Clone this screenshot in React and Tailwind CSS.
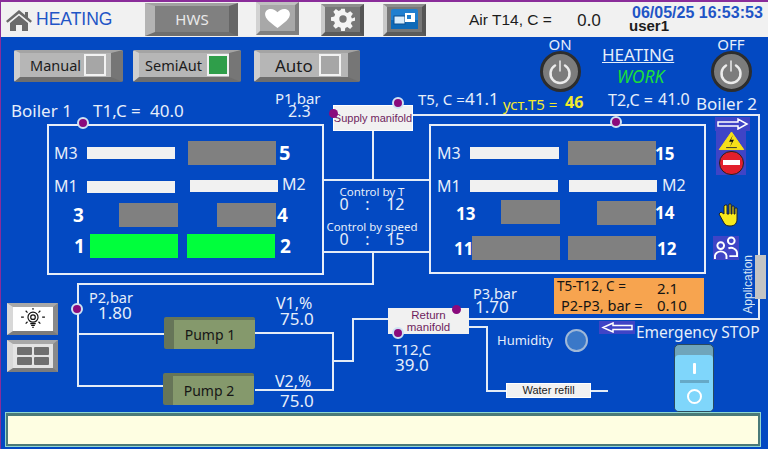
import React from "react";

const Noto = "font-['Noto_Sans',sans-serif]";
const Arial = "font-['Liberation_Sans',sans-serif]";

/* Free-canvas pieces of the process diagram */
function At({ x, y, className = "", children }) {
  return (
    <div className={`absolute ${className}`} style={{ left: x, top: y }}>
      {children}
    </div>
  );
}
function T({ x, y, c = "text-[#e6eefa]", s = "text-[16px]", children }) {
  return (
    <At x={x} y={y} className={`whitespace-nowrap leading-none ${Noto} ${c} ${s}`}>
      {children}
    </At>
  );
}
/* two-line reading: caption above value */
function Reading({ x, y, cap, val, capS = "text-[15px]", valS = "text-[17px]", indent, gap = "leading-[13px]" }) {
  return (
    <At x={x} y={y} className={`flex flex-col whitespace-nowrap text-[#e6eefa] ${Noto}`}>
      <span className={`${capS} ${gap}`}>{cap}</span>
      <span className={`${valS} ${gap}`} style={{ marginLeft: indent }}>
        {val}
      </span>
    </At>
  );
}
function Pipe({ x, y, w, h }) {
  return <div className="absolute bg-[#e4ecf6]" style={{ left: x, top: y, width: w || 2, height: h || 2 }} />;
}
function Dot({ x, y, ring = true }) {
  return ring ? (
    <div className="absolute w-[12px] h-[12px] rounded-full bg-[#8a0a7c] border-2 border-[#cfe2f3]" style={{ left: x - 6, top: y - 6 }} />
  ) : (
    <div className="absolute w-[9px] h-[9px] rounded-full bg-[#8a0a7c]" style={{ left: x - 4, top: y - 4 }} />
  );
}
function Power({ x, y, label }) {
  return (
    <At x={x} y={y} className="flex flex-col items-center w-[42px]">
      <span className={`text-[#e6eefa] text-[15px] leading-[14px] ${Noto}`}>{label}</span>
      <div className="w-[41px] h-[41px] rounded-full bg-[#7c7c7c] border-[3px] border-[#2d2d2d] flex items-center justify-center">
        <svg width="26" height="26" viewBox="0 0 26 26" fill="none" stroke="#ececec" strokeLinecap="round">
          <path d="M8 6.500a9.500 9.500 0 1 0 10 0" strokeWidth="2.500" />
          <path d="M13 2v10" strokeWidth="1.500" />
        </svg>
      </div>
    </At>
  );
}

/* Header button with mitred bevel */
function HeadBtn({ className, children }) {
  return (
    <div className={`flex items-center justify-center shrink-0 border-solid border-t-[3px] border-l-[4px] border-r-[4px] border-b-[4px] ${className}`}>
      {children}
    </div>
  );
}
function SideBtn({ className, children }) {
  return (
    <div className={`w-[51px] flex items-center justify-center border-solid border-t-[4px] border-l-[6px] border-r-[5px] border-b-[4px] border-t-[#a8a8a8] border-l-[#d8d8d8] border-r-[#8a8a8a] border-b-[#7c7c7c] ${className}`}>
      {children}
    </div>
  );
}
const darkBtn = "w-[43px] h-[32px] bg-[#777777] border-t-[#8d8d8d] border-l-[#c9c9c9] border-r-[#555555] border-b-[#5b5b5b]";

function Lamp({ on, className = "" }) {
  return (
    <div className={`w-[22px] h-[22px] shrink-0 border-[2px] border-[#f2f2f2] ${on ? "bg-[#2f9e4a]" : "bg-[#a6a6a6]"} ${className}`} />
  );
}
function Mode({ w, label, on, size, pad, lamp }) {
  return (
    <div
      className={`flex items-center justify-between h-[32px] rounded-[2px] bg-[#b6b6b6] border-solid border-t-[3px] border-l-[6px] border-r-[12px] border-b-[5px] border-t-[#a4a4a4] border-l-[#cfcfcf] border-r-[#767676] border-b-[#6e6e6e] ${w}`}
    >
      <span className={`text-[#1c1c1c] leading-none whitespace-nowrap ${size} ${Noto} ${pad}`}>{label}</span>
      <Lamp on={on} className={lamp} />
    </div>
  );
}
function Pump({ x, y, label }) {
  return (
    <At x={x} y={y} className="w-[91px] h-[32px] bg-[#85996c] border-solid border-l-[10px] border-t-[3px] border-l-[#667558] border-t-[#667558] rounded-[2px] flex items-center justify-center pr-[9px]">
      <span className={`text-[#161616] text-[14px] leading-none ${Noto}`}>{label}</span>
    </At>
  );
}

/* Boiler contents */
const Bar = ({ className = "" }) => <div className={`h-[12px] bg-[#f1f1f1] shrink-0 ${className}`} />;
const Block = ({ className = "" }) => <div className={`h-[24px] bg-[#808080] shrink-0 ${className}`} />;
const Lbl = ({ className = "", children }) => (
  <span className={`text-[#e6eefa] text-[16px] leading-none whitespace-nowrap ${Noto} ${className}`}>{children}</span>
);
const Num = ({ className = "", children }) => (
  <span className={`text-white font-bold leading-none whitespace-nowrap ${Noto} ${className}`}>{children}</span>
);

function Boiler1() {
  return (
    <At x={47} y={124} className="w-[277px] h-[151px] border-2 border-[#e8eef8] flex flex-col pt-[15px]">
      <div className="flex items-center h-[24px]">
        <Lbl className="w-[38px] pl-[5px] text-[15.500px]">M3</Lbl>
        <Bar className="w-[88px]" />
        <Block className="w-[88px] ml-[13px]" />
        <Num className="text-[20px] ml-[3px]">5</Num>
      </div>
      <div className="flex items-center h-[24px] mt-[9px]">
        <Lbl className="w-[38px] pl-[5px] text-[15.500px]">M1</Lbl>
        <Bar className="w-[88px] mt-[2px]" />
        <Bar className="w-[88px] ml-[15px] mb-[1px]" />
        <Lbl className="ml-[4px] mb-[4px] text-[15.500px]">M2</Lbl>
      </div>
      <div className="flex items-center h-[24px] mt-[5px]">
        <Num className="text-[19px] w-[70px] pl-[24px]">3</Num>
        <Block className="w-[59px]" />
        <Block className="w-[59px] ml-[39px]" />
        <Num className="text-[19px] ml-[1px]">4</Num>
      </div>
      <div className="flex items-center h-[24px] mt-[7px]">
        <Num className="text-[19px] w-[41px] pl-[25px]">1</Num>
        <Block className="w-[88px] !bg-[#00ff3c]" />
        <Block className="w-[88px] ml-[9px] !bg-[#00ff3c]" />
        <Num className="text-[19px] ml-[5px]">2</Num>
      </div>
    </At>
  );
}
function Boiler2() {
  return (
    <At x={429} y={124} className="w-[277px] h-[150px] border-2 border-[#e8eef8] flex flex-col pt-[15px]">
      <div className="flex items-center h-[24px]">
        <Lbl className="w-[39px] pl-[6px] text-[15.500px]">M3</Lbl>
        <Bar className="w-[89px]" />
        <Block className="w-[88px] ml-[9px]" />
        <Num className="text-[17px] -ml-[1px]">15</Num>
      </div>
      <div className="flex items-center h-[24px] mt-[9px]">
        <Lbl className="w-[39px] pl-[6px] text-[15.500px]">M1</Lbl>
        <Bar className="w-[88px]" />
        <Bar className="w-[88px] ml-[11px]" />
        <Lbl className="ml-[5px] mb-[2px] text-[15.500px]">M2</Lbl>
      </div>
      <div className="flex items-center h-[24px] mt-[2px]">
        <Num className="text-[17px] w-[70px] pl-[25px] mt-[3px]">13</Num>
        <Block className="w-[59px]" />
        <Block className="w-[59px] ml-[37px] mt-[2px]" />
        <Num className="text-[17px] ml-[-1px]">14</Num>
      </div>
      <div className="flex items-center h-[24px] mt-[12px]">
        <Num className="text-[17px] w-[41px] pl-[23px]">11</Num>
        <Block className="w-[88px]" />
        <Block className="w-[88px] ml-[8px]" />
        <Num className="text-[17px] ml-[1px]">12</Num>
      </div>
    </At>
  );
}

function ControlGroup() {
  return (
    <At x={322} y={186} className={`w-[100px] flex flex-col items-center text-[#e6eefa] ${Noto}`}>
      <span className="text-[11.500px] leading-[12px] h-[12px]">Control by T</span>
      <span className="text-[16px] leading-[13px] h-[23px] whitespace-pre">{"0    :    12"}</span>
      <span className="text-[11.500px] leading-[12px] h-[12px]">Control by speed</span>
      <span className="text-[16px] leading-[13px] whitespace-pre">{"0    :    15"}</span>
    </At>
  );
}

function SideIcons() {
  return (
    <At x={715} y={117} className="w-[36px] flex flex-col items-start">
      <div className="w-[35px] h-[14px] bg-[#3f44c6] flex items-center justify-center">
        <svg width="32" height="12" viewBox="0 0 32 12" fill="none" stroke="#fff" strokeWidth="1.500">
          <path d="M1 4h20V1l9 5-9 5V8H1z" />
        </svg>
      </div>
      <div className="w-[30px] h-[44px] ml-[1px] bg-[#3f44c6] flex flex-col items-center">
        <svg width="27" height="20" viewBox="0 0 27 20">
          <path d="M13.500 1 26 19H1z" fill="#f7e019" stroke="#f7e019" />
          <path d="M15 4l-4 7h3l-2 5 4-7h-3z" fill="#111" />
          <path d="M8 17h11" stroke="#333" strokeWidth="1" />
        </svg>
        <div className="w-[25px] h-[25px] rounded-full bg-[#e21f2c] border border-[#222] flex items-center justify-center">
          <div className="w-[17px] h-[5px] bg-white" />
        </div>
      </div>
      <svg className="mt-[28px] ml-[3px]" width="21" height="24" viewBox="0 0 21 24">
        <path d="M6 3v8L3 9 1 11l5 9c1 2 3 3 6 3 5 0 7-3 7-7V5h-2v6h-1V3h-2v8h-1V1h-2v10H9V2H7z" fill="#f8ea1c" stroke="#222" strokeWidth="1" />
      </svg>
      <div className="w-[26px] h-[24px] mt-[9px] -ml-[2px] bg-[#3f44c6]">
        <svg width="26" height="24" viewBox="0 0 27 25" fill="none" stroke="#fff" strokeWidth="2">
          <circle cx="8" cy="10" r="3.500" />
          <circle cx="19" cy="5" r="3.500" />
          <path d="M2 24v-3c0-3 3-5 6-5s6 2 6 5v3" />
          <path d="M16 13c4-2 9 1 9 5v3h-8" />
        </svg>
      </div>
    </At>
  );
}

function Pipes() {
  return (
    <>
      <Pipe x={400} y={114} w={360} />
      <Pipe x={758} y={114} h={205} />
      <Pipe x={372} y={130} h={50} />
      <Pipe x={322} y={179} w={108} />
      <Pipe x={322} y={251} w={108} />
      <Pipe x={372} y={252} h={32} />
      <Pipe x={78} y={283} w={296} />
      <Pipe x={77} y={283} h={104} />
      <Pipe x={78} y={333} w={87} />
      <Pipe x={78} y={385} w={87} />
      <Pipe x={255} y={332} w={78} />
      <Pipe x={255} y={389} w={78} />
      <Pipe x={332} y={332} h={59} />
      <Pipe x={333} y={360} w={20} />
      <Pipe x={352} y={318} h={44} />
      <Pipe x={352} y={318} w={36} />
      <Pipe x={468} y={318} w={292} />
      <Pipe x={468} y={326} w={18} />
      <Pipe x={486} y={326} h={65} />
      <Pipe x={486} y={390} w={20} />
      <Pipe x={590} y={390} w={18} />
    </>
  );
}

export default function App() {
  return (
    <div className="relative w-[768px] h-[449px] overflow-hidden bg-[#0349c2] flex flex-col">
      {/* top bar */}
      <header className="h-[37px] shrink-0 bg-[#f1f1f1] border-t-[2px] border-[#8a2d9a] flex items-center">
        <div className="w-[145px] shrink-0 flex items-center pl-[5px] gap-[3px]">
          <svg width="28" height="22" viewBox="0 0 28 22" fill="#6a6a6a">
            <path d="M14 1 1 12l1.600 1.800L14 4.400l11.400 9.400L27 12l-4-3.400V3h-3v3z" />
            <path d="M5 14v8h6v-6h6v6h6v-8L14 6.500z" />
          </svg>
          <span className={`text-[#1f55c6] text-[17.500px] leading-none ${Arial}`}>HEATING</span>
        </div>
        <HeadBtn className="w-[93px] h-[33px] bg-[#808080] border-l-[10px] border-r-[9px] border-t-[#a2a2a2] border-l-[#b4b4b4] border-r-[#666666] border-b-[#6e6e6e]">
          <span className={`text-[#e9e9e9] text-[15px] leading-none ${Noto}`}>HWS</span>
        </HeadBtn>
        <HeadBtn className="w-[43px] h-[33px] ml-[18px] -mt-[2px] bg-[#a8a8a8] border-t-[#c0c0c0] border-l-[#d2d2d2] border-r-[#7e7e7e] border-b-[#808080]">
          <svg width="27" height="21" viewBox="0 0 28 22">
            <path d="M14 21C6 15 1 11 1 6.500 1 3 4 1 7 1c3 0 5 1.500 7 3.500C16 2.500 18 1 21 1c3 0 6 2 6 5.500C27 11 22 15 14 21z" fill="#fff" />
          </svg>
        </HeadBtn>
        <HeadBtn className={`${darkBtn} ml-[22px]`}>
          <svg width="24" height="24" viewBox="0 0 26 26" fill="#f4f4f4">
            <path fillRule="evenodd" d="M11 2h4l.6 3.500 2.300 1 3-2 2.800 2.800-2 3 1 2.200L26 11v4l-3.500.6-1 2.300 2 3-2.800 2.800-3-2-2.200 1L15 26h-4l-.6-3.500-2.300-1-3 2-2.800-2.800 2-3-1-2.200L0 15v-4l3.500-.6 1-2.300-2-3 2.800-2.800 3 2 2.200-1zM13 9a4 4 0 1 0 0 8 4 4 0 0 0 0-8z" />
          </svg>
        </HeadBtn>
        <HeadBtn className={`${darkBtn} ml-[19px]`}>
          <svg width="27" height="20" viewBox="0 0 27 20">
            <rect width="27" height="20" rx="2" fill="#1f7fd0" />
            <rect y="11" width="27" height="9" fill="#0e6ab8" />
            <rect x="3" y="7" width="11" height="8" fill="#d7ebfa" stroke="#0b4f8f" />
            <rect x="14" y="4" width="10" height="9" fill="#fff" />
            <rect x="16" y="6" width="4" height="4" fill="#1f7fd0" />
          </svg>
        </HeadBtn>
        <span className={`w-[108px] shrink-0 ml-[43px] text-[#1c1c1c] text-[15.500px] leading-none ${Arial}`}>Air T14, C =</span>
        <span className={`w-[55px] shrink-0 text-[#1c1c1c] text-[17px] leading-none ${Noto}`}>0.0</span>
        <div className={`flex flex-col font-bold leading-none whitespace-nowrap -mt-[3px] ${Arial}`}>
          <span className="text-[#1f55c6] text-[16px] leading-[15px]">06/05/25 16:53:53</span>
          <span className="text-[#1c1c1c] text-[15px] leading-[12px] -ml-[3px]">user1</span>
        </div>
      </header>

      {/* mode buttons */}
      <div className="flex pl-[14px] pt-[13px]">
        <Mode w="w-[109px]" label="Manual" size="text-[14.500px]" pad="pl-[10px]" lamp="mr-[5px]" />
        <div className="w-[10px]" />
        <Mode w="w-[108px]" label="SemiAut" on size="text-[14.500px]" pad="pl-[6px]" />
        <div className="w-[13px]" />
        <Mode w="w-[106px]" label="Auto" size="text-[17px]" pad="pl-[15px]" lamp="mr-[7px]" />
      </div>

      <Pipes />

      {/* status */}
      <Power x={539} y={37} label="ON" />
      <Power x={710} y={37} label="OFF" />
      <T x={602} y={46} s="text-[17px]">
        <span className="underline">HEATING</span>
      </T>
      <At x={617} y={68} className={`text-[#1cdf3a] text-[17.500px] italic leading-none ${Noto}`}>WORK</At>

      {/* top readings */}
      <T x={11} y={102} s="text-[17px]">Boiler 1</T>
      <T x={93} y={102} s="text-[17px]">T1,C =</T>
      <T x={150} y={102} s="text-[17px]">40.0</T>
      <Reading x={275} y={92} cap="P1,bar" val="2.3" valS="text-[16px]" indent={13} />
      <T x={418} y={92} s="text-[15px]">T5, C =</T>
      <T x={465} y={90} s="text-[17px]">41.1</T>
      <T x={503} y={97} c="text-[#f3ea2e]" s="text-[15px]">уст.T5 =</T>
      <T x={565} y={94} c="text-[#f3ea2e] font-bold" s="text-[16px]">46</T>
      <T x={608} y={92} s="text-[16px]">T2,C =</T>
      <T x={658} y={91} s="text-[16px]">41.0</T>
      <T x={696} y={95} s="text-[17px]">Boiler 2</T>

      <Boiler1 />
      <Boiler2 />

      <At x={333} y={105} className={`w-[80px] h-[26px] bg-[#f1f1f1] border border-white flex items-center justify-center text-[#6f1f5e] text-[11px] whitespace-nowrap ${Arial}`}>
        Supply manifold
      </At>
      <ControlGroup />

      <Dot x={83} y={123} />
      <Dot x={333} y={113} ring={false} />
      <Dot x={398} y={103} />
      <Dot x={616} y={122} />
      <Dot x={77} y={309} />

      <SideIcons />
      <At x={742} y={255} className={`text-[#d8e6f5] text-[12px] leading-none [writing-mode:vertical-rl] rotate-180 ${Arial}`}>Application</At>
      <At x={755} y={255} className="w-[11px] h-[44px] bg-[#c4c4c4]" />

      {/* differences */}
      <At x={554} y={278} className={`w-[150px] h-[36px] bg-[#f7a44f] grid grid-cols-[103px_1fr] grid-rows-2 items-center text-[#141414] leading-none whitespace-nowrap ${Noto}`}>
        <span className="pl-[3px] text-[13.500px]">T5-T12, C =</span>
        <span className="text-[15px] mt-[2px]">2.1</span>
        <span className="pl-[7px] text-[14.500px]">P2-P3, bar =</span>
        <span className="text-[15px]">0.10</span>
      </At>

      {/* return side */}
      <At x={388} y={308} className={`w-[81px] h-[26px] bg-[#f1f1f1] flex items-center justify-center text-center text-[#6f1f5e] text-[11.500px] leading-[12px] ${Arial}`}>
        Return
        <br />
        manifold
      </At>
      <Dot x={456} y={309} ring={false} />
      <Dot x={398} y={333} />
      <Reading x={473} y={287} cap="P3,bar" val="1.70" capS="text-[14.500px]" indent={2} />
      <Reading x={393} y={341} cap="T12,C" val="39.0" indent={2} gap="leading-[16px]" />
      <At x={497} y={329} className="flex items-center">
        <span className={`w-[68px] text-[#e6eefa] text-[13px] leading-none ${Noto}`}>Humidity</span>
        <div className="w-[23px] h-[23px] rounded-full bg-[#3a78c8] border-[2px] border-[#9fb8d8]" />
      </At>

      <At x={599} y={321} className="w-[36px] h-[13px] bg-[#3f44c6] flex items-center justify-center">
        <svg width="32" height="11" viewBox="0 0 32 11" fill="none" stroke="#fff" strokeWidth="1.500">
          <path d="M31 3.500H12V1L2 5.500 12 10V7.500h19z" />
        </svg>
      </At>
      <T x={636} y={325} s="text-[15.500px]">Emergency STOP</T>

      <At x={506} y={383} className={`w-[85px] h-[15px] bg-[#f1f1f1] border border-white flex items-center justify-center text-[#1c1c1c] text-[11px] ${Arial}`}>
        Water refill
      </At>

      {/* rocker */}
      <At x={674} y={344} className="w-[40px] h-[68px] rounded-[5px] bg-[#6fa5bb] border border-[#2a4a5e] pt-[10px]">
        <div className="flex flex-col items-center h-[56px] rounded-[4px] bg-[#7fd6fb] pt-[8px]">
          <div className="w-[3px] h-[11px] bg-white rounded-[1px]" />
          <div className="w-[29px] h-[3px] bg-[#66a9c7] mt-[6px]" />
          <div className="w-[15px] h-[15px] rounded-full border-2 border-white mt-[6px]" />
        </div>
      </At>

      {/* left buttons */}
      <At x={7} y={303} className="flex flex-col gap-[5px]">
        <SideBtn className="h-[32px] bg-white">
          <svg width="26" height="22" viewBox="0 0 28 24" fill="none" stroke="#111" strokeWidth="1.300">
            <circle cx="14" cy="10" r="5.500" />
            <circle cx="14" cy="10" r="2.500" />
            <path d="M11 17h6M12 19h4M13 21h2M14 0v2M4 10H1M27 10h-3M6 3l2 2M22 3l-2 2M6 17l2-2M22 17l-2-2" />
          </svg>
        </SideBtn>
        <SideBtn className="h-[32px] bg-[#e4e4e4]">
          <div className="grid grid-cols-2 gap-[2px]">
            <div className="w-[15px] h-[8px] bg-[#6f6f6f] rounded-[1px]" />
            <div className="w-[15px] h-[8px] bg-[#6f6f6f] rounded-[1px]" />
            <div className="w-[15px] h-[8px] bg-[#6f6f6f] rounded-[1px]" />
            <div className="w-[15px] h-[8px] bg-[#6f6f6f] rounded-[1px]" />
          </div>
        </SideBtn>
      </At>

      <Reading x={89} y={290} cap="P2,bar" val="1.80" capS="text-[14.500px]" indent={9} gap="leading-[15px]" />
      <Pump x={164} y={317} label="Pump 1" />
      <Pump x={163} y={373} label="Pump 2" />
      <Reading x={276} y={295} cap="V1,%" val="75.0" capS="text-[16px]" indent={4} gap="leading-[16px]" />
      <Reading x={275} y={371} cap="V2,%" val="75.0" capS="text-[16px]" indent={5} gap="leading-[20px]" />

      {/* message bar */}
      <div className="mt-auto ml-[6px] mr-[8px] mb-[3px] h-[33px] shrink-0 bg-[#fefee2] border-[2px] border-t-[3px] border-[#4a7a78] shadow-[0_0_0_1px_#8fd8d0]" />

      {/* left window edge */}
      <div className="absolute left-0 top-0 w-[1px] h-full bg-[#8a2d9a]" />
    </div>
  );
}
